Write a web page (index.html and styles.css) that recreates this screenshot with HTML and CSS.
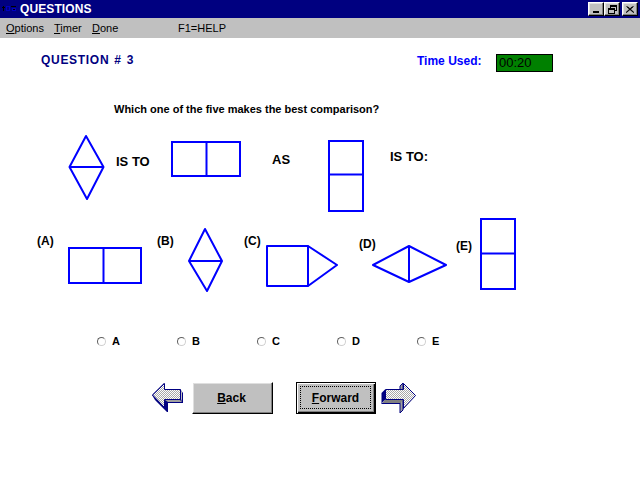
FILE: index.html
```html
<!DOCTYPE html>
<html>
<head>
<meta charset="utf-8">
<link rel="stylesheet" href="styles.css">
</head>
<body>
<div class="window">
  <div class="titlebar">
    <svg class="appicon" width="18" height="18" viewBox="0 0 18 18">
      <rect x="2" y="7" width="3" height="1" fill="#000"/>
      <rect x="3" y="6" width="1" height="5" fill="#000"/>
      <rect x="6" y="6" width="4" height="5" fill="#0000c0"/>
      <rect x="7" y="7" width="2" height="3" fill="#000080"/>
      <rect x="11" y="6" width="5" height="1" fill="#000"/>
      <rect x="12" y="8" width="4" height="3" fill="#0000c0"/>
      <rect x="13" y="9" width="2" height="1" fill="#000"/>
    </svg>
    <span class="title">QUESTIONS</span>
    <div class="caption-btns">
      <span class="cbtn"><svg width="8" height="8" viewBox="0 0 8 8"><rect x="1" y="6" width="6" height="2" fill="#000"/></svg></span>
      <span class="cbtn"><svg width="9" height="9" viewBox="0 0 9 9"><rect x="2.5" y="0.5" width="6" height="5" fill="none" stroke="#000"/><rect x="2" y="0" width="7" height="2" fill="#000"/><rect x="0.5" y="3.5" width="6" height="5" fill="#c0c0c0" stroke="#000"/><rect x="0" y="3" width="7" height="2" fill="#000"/></svg></span>
      <span class="cbtn close"><svg width="8" height="7" viewBox="0 0 8 7"><path d="M0.5 0.5 L7.5 6.5 M1.5 0.5 L8 6.5 M7.5 0.5 L0.5 6.5 M6.5 0.5 L0 6.5" stroke="#000" stroke-width="1" fill="none"/></svg></span>
    </div>
  </div>
  <div class="menubar">
    <span class="menu m-options"><u>O</u>ptions</span>
    <span class="menu m-timer"><u>T</u>imer</span>
    <span class="menu m-done"><u>D</u>one</span>
    <span class="menu m-help">F1=HELP</span>
  </div>
  <div class="content">
    <div class="header-row">
      <span class="qnum">QUESTION # 3</span>
      <span class="time-label">Time Used:</span>
      <span class="timer">00:20</span>
    </div>
    <div class="question">Which one of the five makes the best comparison?</div>
    <div class="analogy">
      <svg class="shp s-d1" width="37" height="66"><g fill="none" stroke="#0000ff" stroke-width="2" stroke-linejoin="round"><polygon points="18,1 35.5,32 19,64 1.5,32"/><line x1="1.5" y1="32" x2="35.5" y2="32"/></g></svg>
      <span class="word w-isto">IS TO</span>
      <svg class="shp s-r1" width="73" height="39"><g fill="none" stroke="#0000ff" stroke-width="2"><rect x="2" y="2" width="68" height="34"/><line x1="36.5" y1="2" x2="36.5" y2="36"/></g></svg>
      <span class="word w-as">AS</span>
      <svg class="shp s-r2" width="39" height="75"><g fill="none" stroke="#0000ff" stroke-width="2"><rect x="2" y="2" width="34" height="70"/><line x1="2" y1="35.5" x2="36" y2="35.5"/></g></svg>
      <span class="word w-isto2">IS TO:</span>
    </div>
    <div class="options">
      <span class="lbl l-a">(A)</span>
      <svg class="shp o-a" width="76" height="39"><g fill="none" stroke="#0000ff" stroke-width="2"><rect x="2" y="2" width="72" height="35"/><line x1="36.5" y1="2" x2="36.5" y2="37"/></g></svg>
      <span class="lbl l-b">(B)</span>
      <svg class="shp o-b" width="38" height="67"><g fill="none" stroke="#0000ff" stroke-width="2" stroke-linejoin="round"><polygon points="18,2 35,34 20,64 2,34"/><line x1="2" y1="34" x2="35" y2="34"/></g></svg>
      <span class="lbl l-c">(C)</span>
      <svg class="shp o-c" width="75" height="44"><g fill="none" stroke="#0000ff" stroke-width="2" stroke-linejoin="round"><rect x="2" y="2" width="41" height="40"/><polyline points="43,2 72,21 43,42"/></g></svg>
      <span class="lbl l-d">(D)</span>
      <svg class="shp o-d" width="78" height="40"><g fill="none" stroke="#0000ff" stroke-width="2" stroke-linejoin="round"><polygon points="2,21 38,2 75,21 38,38"/><line x1="38" y1="2" x2="38" y2="38"/></g></svg>
      <span class="lbl l-e">(E)</span>
      <svg class="shp o-e" width="38" height="74"><g fill="none" stroke="#0000ff" stroke-width="2"><rect x="2" y="2" width="34" height="70"/><line x1="2" y1="36.5" x2="36" y2="36.5"/></g></svg>
    </div>
    <div class="radios">
      <label class="radio"><span class="dot"></span>A</label>
      <label class="radio"><span class="dot"></span>B</label>
      <label class="radio"><span class="dot"></span>C</label>
      <label class="radio"><span class="dot"></span>D</label>
      <label class="radio"><span class="dot"></span>E</label>
    </div>
    <div class="buttons">
      <svg class="arrow a-left" width="33" height="32" viewBox="0 0 33 32">
        <defs>
          <pattern id="chk" width="2" height="2" patternUnits="userSpaceOnUse">
            <rect width="2" height="2" fill="#ffffff"/>
            <rect width="1" height="1" fill="#a8a8a8"/>
            <rect x="1" y="1" width="1" height="1" fill="#a8a8a8"/>
          </pattern>
        </defs>
        <polygon points="1,13 4,18 16,30 17,30 17,21 32,21 32,11 29,7 13,7 13,1" fill="#000080"/>
        <polygon points="14,18 29,18 31,20 17,20" fill="#a0a0a0"/>
        <polygon points="30,8 31,10 31,20 30,17" fill="#c0c0c0"/>
        <polygon points="1.5,13 13.5,1.5 13.5,7.5 29.5,7.5 29.5,17.5 13.5,17.5 13.5,25.5" fill="url(#chk)" stroke="#000080" stroke-width="1"/>
      </svg>
      <button class="btn back"><span class="cap"><u>B</u>ack</span></button>
      <button class="btn fwd"><span class="focus"><u>F</u>orward</span></button>
      <svg class="arrow a-right" width="37" height="32" viewBox="0 0 37 32">
        <defs>
          <pattern id="chk2" width="2" height="2" patternUnits="userSpaceOnUse">
            <rect width="2" height="2" fill="#ffffff"/>
            <rect width="1" height="1" fill="#a8a8a8"/>
            <rect x="1" y="1" width="1" height="1" fill="#a8a8a8"/>
          </pattern>
        </defs>
        <polygon points="20,4 23,1 23,28 20,31" fill="#a0a0a0" stroke="#000080" stroke-width="1"/>
        <polygon points="5,17.5 23,17.5 20,21.5 2,21.5" fill="#808080"/>
        <polygon points="1.5,11 5,7.5 5,17.5 1.5,21.5" fill="#000080"/>
        <polygon points="35.5,13.5 23.5,1.5 23.5,7.5 5.5,7.5 5.5,17.5 23.5,17.5 23.5,26.5" fill="url(#chk2)" stroke="#000080" stroke-width="1"/>
        <line x1="1.5" y1="21.5" x2="20" y2="21.5" stroke="#000080"/>
      </svg>
    </div>
  </div>
</div>
</body>
</html>
```

FILE: styles.css
```css
html, body {
  margin: 0;
  padding: 0;
}
body {
  width: 640px;
  height: 480px;
  overflow: hidden;
  background: #ffffff;
  font-family: "Liberation Sans", Arial, sans-serif;
}
.window {
  display: flex;
  flex-direction: column;
  height: 480px;
}
.titlebar {
  height: 18px;
  background: #000080;
  display: flex;
  align-items: center;
}
.appicon {
  display: block;
  flex: none;
}
.title {
  color: #ffffff;
  font-weight: bold;
  font-size: 12px;
  line-height: 14px;
  margin-left: 2px;
  letter-spacing: 0.1px;
}
.caption-btns {
  margin-left: auto;
  margin-right: 2px;
  display: flex;
  align-items: center;
}
.cbtn {
  box-sizing: border-box;
  width: 16px;
  height: 14px;
  background: #c0c0c0;
  border: 1px solid;
  border-color: #ffffff #000000 #000000 #ffffff;
  box-shadow: inset -1px -1px #808080, inset 1px 1px #dfdfdf;
  display: flex;
  align-items: center;
  justify-content: center;
}
.cbtn svg {
  display: block;
  overflow: visible;
}
.cbtn.close {
  margin-left: 2px;
}
.menubar {
  height: 20px;
  background: #c0c0c0;
  display: flex;
  align-items: center;
  padding-left: 6px;
  font-size: 11px;
  color: #000000;
}
.menu {
  line-height: 13px;
}
.m-options { width: 48px; }
.m-timer { width: 38px; }
.m-done { width: 86px; }
.content {
  display: flex;
  flex-direction: column;
}
.header-row {
  margin-top: 15px;
  height: 19px;
  display: flex;
  align-items: flex-start;
  padding-left: 41px;
}
.qnum {
  width: 376px;
  flex: none;
  color: #000080;
  font-weight: bold;
  font-size: 12px;
  line-height: 14px;
  letter-spacing: 0.7px;
  word-spacing: 1px;
}
.time-label {
  width: 79px;
  flex: none;
  margin-top: 1px;
  color: #0000ff;
  font-weight: bold;
  font-size: 12px;
  line-height: 14px;
}
.timer {
  box-sizing: border-box;
  width: 57px;
  height: 18px;
  margin-top: 1px;
  border: 1px solid #000000;
  background: #008000;
  color: #000000;
  font-size: 13px;
  line-height: 16px;
  padding-left: 2px;
}
.question {
  margin-top: 31px;
  height: 13px;
  padding-left: 114px;
  font-weight: bold;
  font-size: 11px;
  line-height: 13px;
  color: #000000;
}
.shp {
  display: block;
  overflow: visible;
}
.analogy {
  margin-top: 19px;
  height: 78px;
  display: grid;
  grid-template-columns: 48px 54px 102px 55px 63px auto;
  align-items: start;
  padding-left: 68px;
}
.word {
  font-weight: bold;
  font-size: 13px;
  line-height: 15px;
  white-space: nowrap;
  color: #000000;
}
.w-isto { margin-top: 19px; }
.s-r1 { margin-top: 5px; }
.w-as { margin-top: 17px; }
.s-r2 { margin-top: 4px; }
.w-isto2 { margin-top: 14px; }
.options {
  margin-top: 4px;
  height: 77px;
  display: grid;
  grid-template-columns: 30px 90px 30px 57px 21px 94px 12px 85px 23px 38px;
  align-items: start;
  padding-left: 37px;
}
.lbl {
  font-weight: bold;
  font-size: 12px;
  line-height: 14px;
  white-space: nowrap;
  color: #000000;
}
.l-a, .l-b, .l-c { margin-top: 17px; }
.l-d { margin-top: 20px; }
.l-e { margin-top: 22px; }
.o-a { margin-top: 29px; }
.o-b { margin-top: 10px; }
.o-c { margin-top: 27px; }
.o-d { margin-top: 27px; }
.radios {
  margin-top: 40px;
  height: 14px;
  display: grid;
  grid-template-columns: repeat(5, 80px);
  padding-left: 97px;
}
.radio {
  display: flex;
  align-items: flex-start;
  font-weight: bold;
  font-size: 11px;
  line-height: 14px;
  color: #000000;
}
.dot {
  box-sizing: border-box;
  width: 9px;
  height: 9px;
  margin-top: 3px;
  margin-right: 6px;
  border-radius: 50%;
  border: 1px solid;
  border-color: #606060 #d0d0d0 #d0d0d0 #606060;
  background: #ffffff;
}
.buttons {
  margin-top: 34px;
  height: 32px;
  display: flex;
  align-items: flex-start;
  padding-left: 151px;
}
.arrow {
  display: block;
  flex: none;
  overflow: visible;
}
.btn {
  box-sizing: border-box;
  height: 32px;
  margin: 0;
  padding: 0;
  background: #c0c0c0;
  font-family: "Liberation Sans", Arial, sans-serif;
  font-weight: bold;
  font-size: 12px;
  color: #000000;
  display: flex;
  align-items: stretch;
  justify-content: center;
}
.back {
  width: 81px;
  margin-left: 8px;
  border: 1px solid;
  border-color: #ffffff #000000 #000000 #ffffff;
  box-shadow: inset -1px -1px #808080, inset 1px 1px #dfdfdf;
}
.back .cap {
  display: flex;
  align-items: center;
  margin-right: 2px;
}
.fwd {
  width: 80px;
  margin-left: 23px;
  border: 1px solid #000000;
  box-shadow: inset 1px 1px #ffffff, inset -1px -1px #000000, inset -2px -2px #808080;
}
.fwd .focus {
  flex: 1;
  margin: 3px 4px 4px 3px;
  border: 1px dotted #000000;
  display: flex;
  align-items: center;
  justify-content: center;
}
.a-right {
  margin-left: 4px;
}
```
